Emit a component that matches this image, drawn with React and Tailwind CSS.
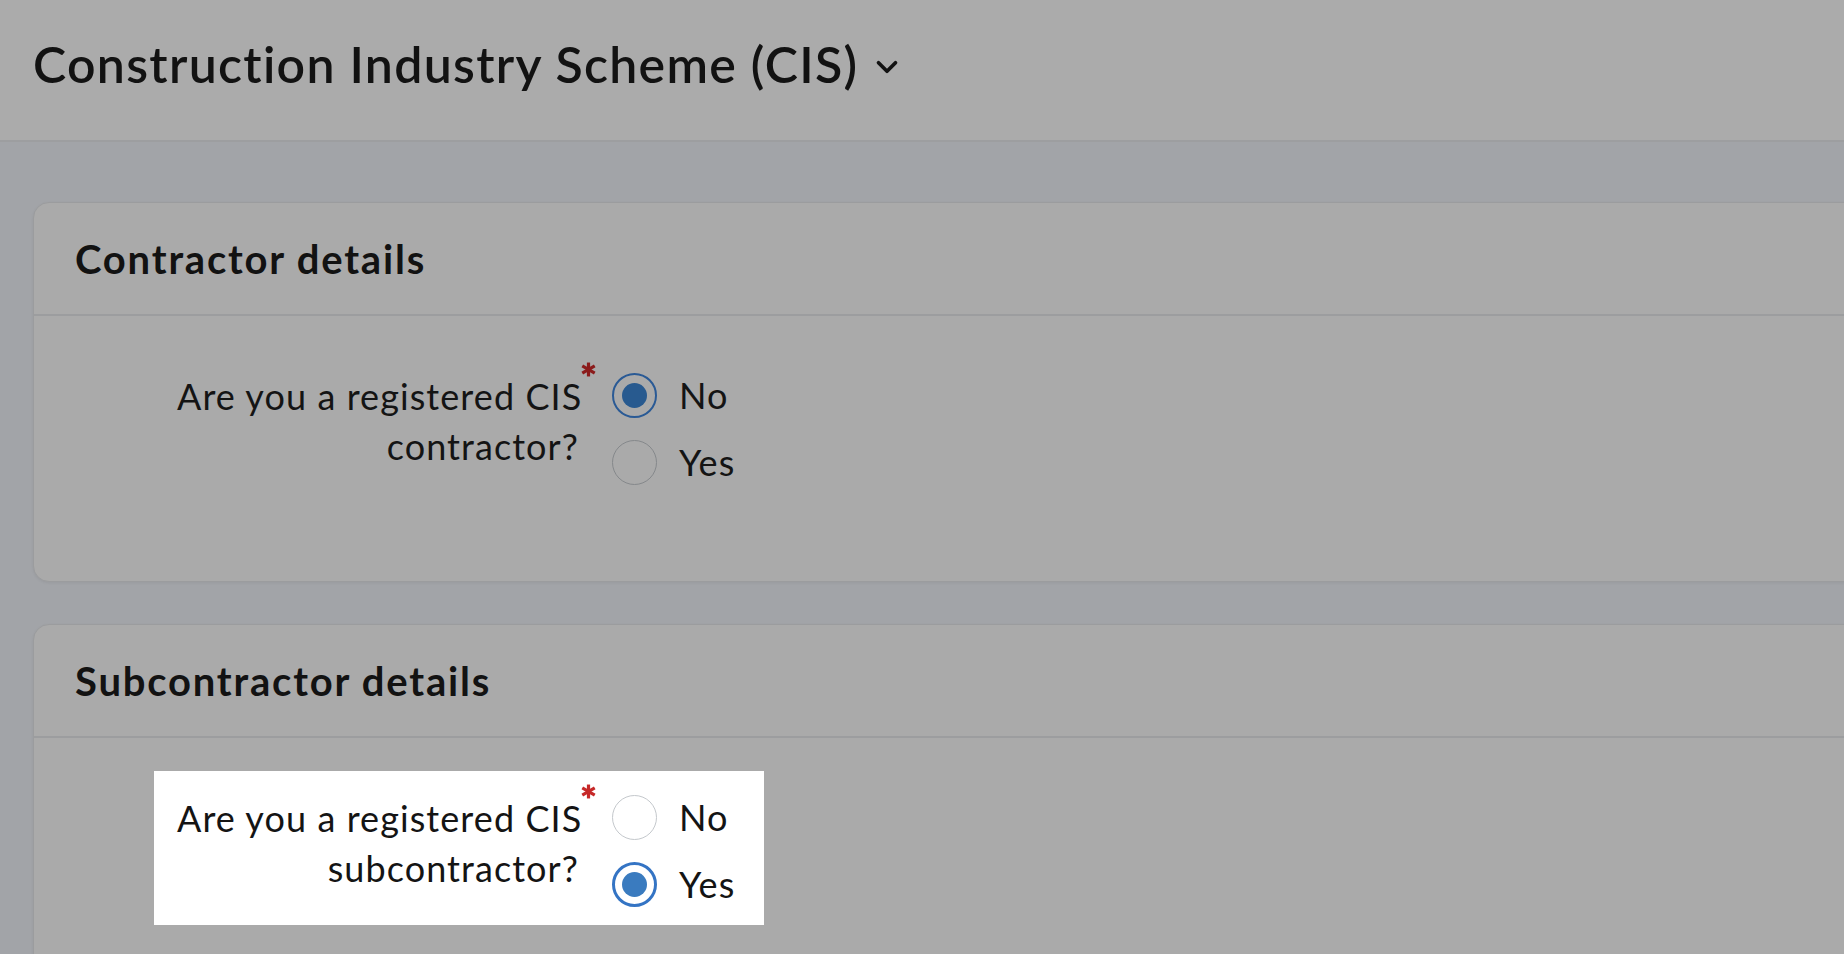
import { ChevronDown } from 'lucide-react'

const font = { fontFamily: 'Lato, "Noto Sans", sans-serif' }

function Asterisk({ color }) {
  return (
    <svg viewBox="0 0 14 14" className={`absolute left-[404px] top-[13px] w-[15px] h-[15px] ${color}`}>
      <g stroke="currentColor" strokeWidth="3" strokeLinecap="butt">
        <line x1="7" y1="0.5" x2="7" y2="13.5" />
        <line x1="1.2" y1="3.6" x2="12.8" y2="10.4" />
        <line x1="1.2" y1="10.4" x2="12.8" y2="3.6" />
      </g>
    </svg>
  )
}

function Radio({ checked, label, highlight }) {
  let ring = 'border-[1.5px] border-[#85888b]'
  let dot = null
  if (highlight && checked) {
    ring = 'border-[3px] border-[#3474c4] bg-white'
    dot = <span className="w-[25px] h-[25px] rounded-full bg-[#3a7bbf]" />
  } else if (highlight) {
    ring = 'border-[1.5px] border-[#c4c8cc] bg-white'
  } else if (checked) {
    ring = 'border-2 border-[#2a5a95]'
    dot = <span className="w-[25px] h-[25px] rounded-full bg-[#285a8f]" />
  }
  return (
    <div className="flex items-center gap-[22px] h-[45px]">
      <span className={`w-[45px] h-[45px] rounded-full flex items-center justify-center ${ring}`}>
        {dot}
      </span>
      <span className="text-[36px] leading-[45px] tracking-[0.03em] text-[#141414]">{label}</span>
    </div>
  )
}

function Question({ who, answer, highlight }) {
  return (
    <div className={`ml-[120px] w-[610px] h-[154px] flex pl-[23px] ${highlight ? 'bg-white' : ''}`}>
      <div className="relative w-[402px] pt-[22px] text-right text-[36px] leading-[50px] tracking-[0.03em] text-[#141414]">
        <span className="whitespace-nowrap">Are you a registered CIS</span>
        <br />
        {who}?
        <Asterisk color={highlight ? 'text-[#c62828]' : 'text-[#8b1b1b]'} />
      </div>
      <div className="ml-[33px] pt-[24px] flex flex-col gap-[22px]">
        <Radio label="No" checked={answer === 'no'} highlight={highlight} />
        <Radio label="Yes" checked={answer === 'yes'} highlight={highlight} />
      </div>
    </div>
  )
}

function Section({ title, children }) {
  return (
    <section className="w-[1900px] rounded-[16px] border border-[#9b9c9e] bg-[#aaaaaa] shadow-[0_1px_3px_rgba(0,0,0,0.06)]">
      <div className="h-[113px] border-b-2 border-[#9c9d9f] px-[41px] flex items-center">
        <h2 className="text-[40px] font-bold tracking-[0.045em] text-[#121212]">{title}</h2>
      </div>
      <div className="h-[265px] pt-[33px]">{children}</div>
    </section>
  )
}

export default function App() {
  return (
    <div className="min-h-screen bg-[#a2a4a8] overflow-hidden" style={font}>
      <header className="h-[142px] bg-[#ababab] border-b-2 border-[#9d9ea0] flex items-center pl-[33px] pb-[12px]">
        <h1 className="text-[50px] font-semibold tracking-[0.026em] text-[#121212] leading-none">Construction Industry Scheme (CIS)</h1>
        <ChevronDown className="ml-[12px] mt-[6px] w-[34px] h-[34px] text-[#121212]" strokeWidth={2.6} />
      </header>

      <main className="pl-[33px] pt-[60px] flex flex-col gap-[42px]">
        <Section title="Contractor details">
          <Question who="contractor" answer="no" />
        </Section>
        <Section title="Subcontractor details">
          <Question who="subcontractor" answer="yes" highlight />
        </Section>
      </main>
    </div>
  )
}
